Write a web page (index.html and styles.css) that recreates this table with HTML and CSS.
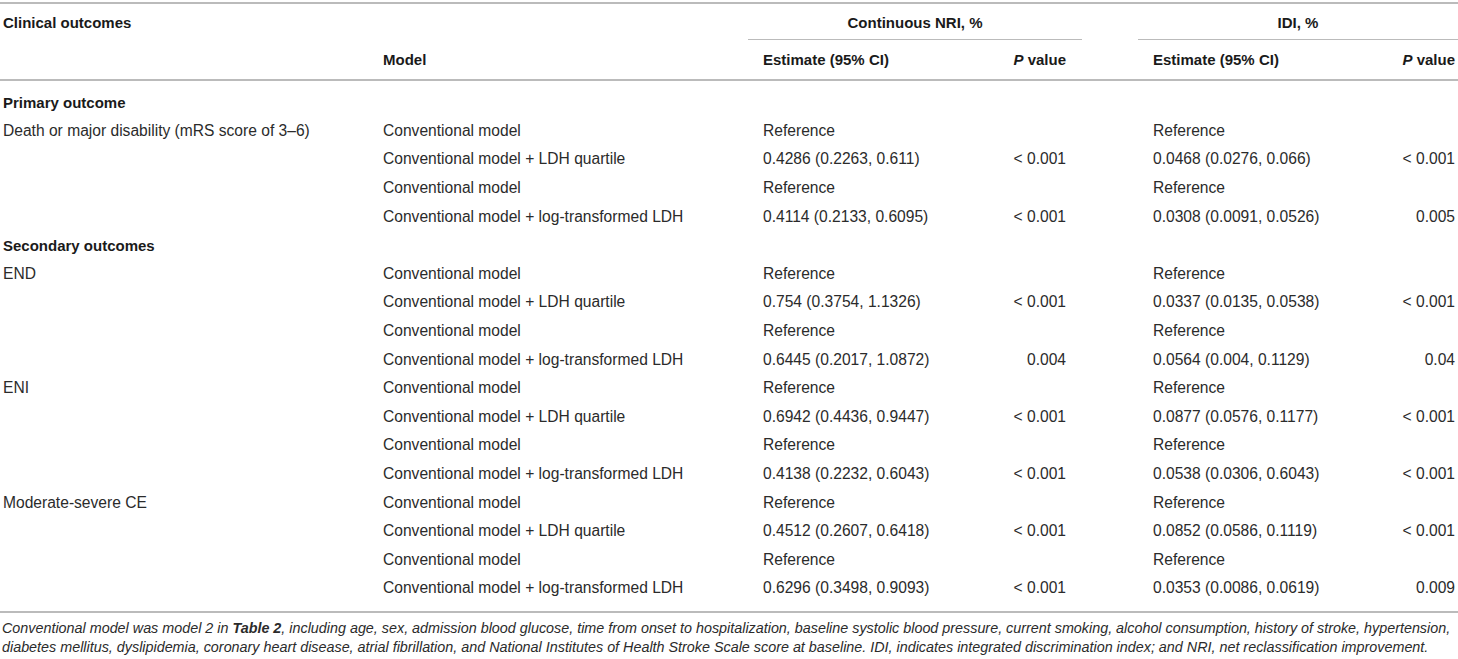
FILE: index.html
```html
<!DOCTYPE html>
<html lang="en">
<head>
    <meta charset="UTF-8">
    <title>Table 3</title>
    <link rel="stylesheet" href="styles.css">
</head>
<body>
<div class="table-wrap">
    <table class="data-table">
        <colgroup>
            <col class="c-outcome">
            <col class="c-model">
            <col class="c-est">
            <col class="c-p">
            <col class="c-gap">
            <col class="c-est2">
            <col class="c-p2">
        </colgroup>
        <thead>
        <tr class="head-top">
            <th class="left">Clinical outcomes</th>
            <th></th>
            <th colspan="2" class="group">Continuous NRI, %</th>
            <th></th>
            <th colspan="2" class="group">IDI, %</th>
        </tr>
        <tr class="head-sub">
            <th></th>
            <th class="left">Model</th>
            <th class="left est">Estimate (95% CI)</th>
            <th class="right p"><i>P</i> value</th>
            <th></th>
            <th class="left est">Estimate (95% CI)</th>
            <th class="right p2"><i>P</i> value</th>
        </tr>
        </thead>
        <tbody>
        <tr class="pad-row"><td colspan="7"></td></tr>
        <tr class="section"><td colspan="7">Primary outcome</td></tr>
        <tr><td>Death or major disability (mRS score of 3–6)</td><td>Conventional model</td><td class="est">Reference</td><td class="p"></td><td></td><td class="est">Reference</td><td class="p2"></td></tr>
        <tr><td></td><td>Conventional model + LDH quartile</td><td class="est">0.4286 (0.2263, 0.611)</td><td class="p">&lt; 0.001</td><td></td><td class="est">0.0468 (0.0276, 0.066)</td><td class="p2">&lt; 0.001</td></tr>
        <tr><td></td><td>Conventional model</td><td class="est">Reference</td><td class="p"></td><td></td><td class="est">Reference</td><td class="p2"></td></tr>
        <tr><td></td><td>Conventional model + log-transformed LDH</td><td class="est">0.4114 (0.2133, 0.6095)</td><td class="p">&lt; 0.001</td><td></td><td class="est">0.0308 (0.0091, 0.0526)</td><td class="p2">0.005</td></tr>
        <tr class="section"><td colspan="7">Secondary outcomes</td></tr>
        <tr><td>END</td><td>Conventional model</td><td class="est">Reference</td><td class="p"></td><td></td><td class="est">Reference</td><td class="p2"></td></tr>
        <tr><td></td><td>Conventional model + LDH quartile</td><td class="est">0.754 (0.3754, 1.1326)</td><td class="p">&lt; 0.001</td><td></td><td class="est">0.0337 (0.0135, 0.0538)</td><td class="p2">&lt; 0.001</td></tr>
        <tr><td></td><td>Conventional model</td><td class="est">Reference</td><td class="p"></td><td></td><td class="est">Reference</td><td class="p2"></td></tr>
        <tr><td></td><td>Conventional model + log-transformed LDH</td><td class="est">0.6445 (0.2017, 1.0872)</td><td class="p">0.004</td><td></td><td class="est">0.0564 (0.004, 0.1129)</td><td class="p2">0.04</td></tr>
        <tr><td>ENI</td><td>Conventional model</td><td class="est">Reference</td><td class="p"></td><td></td><td class="est">Reference</td><td class="p2"></td></tr>
        <tr><td></td><td>Conventional model + LDH quartile</td><td class="est">0.6942 (0.4436, 0.9447)</td><td class="p">&lt; 0.001</td><td></td><td class="est">0.0877 (0.0576, 0.1177)</td><td class="p2">&lt; 0.001</td></tr>
        <tr><td></td><td>Conventional model</td><td class="est">Reference</td><td class="p"></td><td></td><td class="est">Reference</td><td class="p2"></td></tr>
        <tr><td></td><td>Conventional model + log-transformed LDH</td><td class="est">0.4138 (0.2232, 0.6043)</td><td class="p">&lt; 0.001</td><td></td><td class="est">0.0538 (0.0306, 0.6043)</td><td class="p2">&lt; 0.001</td></tr>
        <tr><td>Moderate-severe CE</td><td>Conventional model</td><td class="est">Reference</td><td class="p"></td><td></td><td class="est">Reference</td><td class="p2"></td></tr>
        <tr><td></td><td>Conventional model + LDH quartile</td><td class="est">0.4512 (0.2607, 0.6418)</td><td class="p">&lt; 0.001</td><td></td><td class="est">0.0852 (0.0586, 0.1119)</td><td class="p2">&lt; 0.001</td></tr>
        <tr><td></td><td>Conventional model</td><td class="est">Reference</td><td class="p"></td><td></td><td class="est">Reference</td><td class="p2"></td></tr>
        <tr><td></td><td>Conventional model + log-transformed LDH</td><td class="est">0.6296 (0.3498, 0.9093)</td><td class="p">&lt; 0.001</td><td></td><td class="est">0.0353 (0.0086, 0.0619)</td><td class="p2">0.009</td></tr>
        <tr class="pad-row end"><td colspan="7"></td></tr>
        </tbody>
    </table>
    <p class="table-note">Conventional model was model 2 in <b>Table 2</b>, including age, sex, admission blood glucose, time from onset to hospitalization, baseline systolic blood pressure, current smoking, alcohol consumption, history of stroke, hypertension, diabetes mellitus, dyslipidemia, coronary heart disease, atrial fibrillation, and National Institutes of Health Stroke Scale score at baseline. IDI, indicates integrated discrimination index; and NRI, net reclassification improvement.</p>
</div>
</body>
</html>
```

FILE: styles.css
```css
* {
    box-sizing: border-box;
    margin: 0;
    padding: 0;
}

body {
    background: #fff;
    color: #2b2b2b;
    font-family: "Liberation Sans", Arial, sans-serif;
    font-size: 15.6px;
}

.table-wrap {
    width: 1458px;
    padding-top: 2px;
}

.data-table {
    width: 1458px;
    border-collapse: collapse;
    table-layout: fixed;
    border-top: 2px solid #bbb;
}

.c-outcome { width: 380px; }
.c-model { width: 368px; }
.c-est { width: 250px; }
.c-p { width: 84px; }
.c-gap { width: 56px; }
.c-est2 { width: 240px; }
.c-p2 { width: 80px; }

.data-table th,
.data-table td {
    padding: 0 3px;
    text-align: left;
    white-space: nowrap;
    font-weight: normal;
    vertical-align: middle;
}

.data-table th {
    font-weight: bold;
    font-size: 15px;
    color: #1a1a1a;
}

.head-top th {
    height: 36px;
    padding-top: 2px;
}

.head-top .group {
    text-align: center;
    border-bottom: 1px solid #bbb;
}

.head-sub th {
    height: 41px;
    border-bottom: 2px solid #bbb;
}

.data-table .est {
    padding-left: 15px;
}

.data-table .p {
    text-align: right;
    padding-right: 16px;
}

.data-table .p2 {
    text-align: right;
    padding-right: 3px;
}

.data-table tbody tr {
    height: 28.6px;
}

.data-table tbody tr.pad-row {
    height: 8px;
}

.data-table tbody tr.pad-row.end {
    height: 9px;
    border-bottom: 2px solid #bbb;
}

.section td {
    font-weight: bold;
    font-size: 15px;
    color: #1a1a1a;
}

.table-note {
    margin-top: 6px;
    padding-left: 2px;
    font-style: italic;
    font-size: 14.35px;
    line-height: 19px;
    width: 1458px;
}
```
